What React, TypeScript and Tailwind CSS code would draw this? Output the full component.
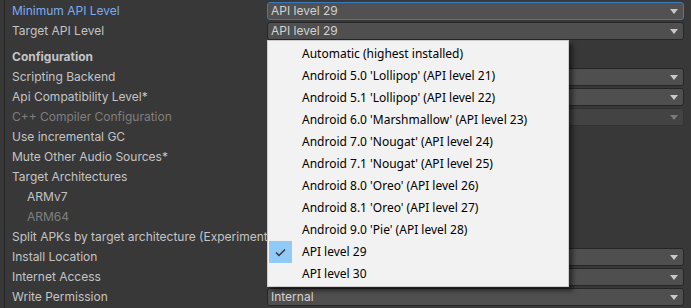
import React from "react";

const labelFont = { fontFamily: "Inter, 'Noto Sans', sans-serif" };
const menuFont = { fontFamily: "'Noto Sans', 'Open Sans', sans-serif" };

function Arrow({ dim }: { dim?: boolean }) {
  return (
    <svg width="8" height="5" viewBox="0 0 8 5" className="shrink-0">
      <polygon points="0,0 8,0 4,5" fill={dim ? "#7a7a7a" : "#c8c8c8"} />
    </svg>
  );
}

function Dropdown({ value, focused, disabled }: { value?: string; focused?: boolean; disabled?: boolean }) {
  const cls = focused
    ? "border-[#3a79bb] bg-[#515151]"
    : disabled
    ? "border-[#333333] bg-[#434343]"
    : "border-[#262626] bg-[#4f4f4f]";
  return (
    <div className={`flex h-[18px] flex-1 items-center justify-between rounded-[3px] border pl-[3px] pr-[5px] ${cls}`}>
      <span className={`text-[12px] leading-[16px] ${disabled ? "text-[#7f7f7f]" : "text-[#d2d2d2]"}`}>{value ?? ""}</span>
      <Arrow dim={disabled} />
    </div>
  );
}

type Row = {
  label: string;
  color?: string;
  indent?: boolean;
  dd?: { value?: string; focused?: boolean; disabled?: boolean };
  bold?: boolean;
};

function FieldRow({ row }: { row: Row }) {
  return (
    <div className="flex h-[20px] items-center">
      <div
        className={`w-[255px] shrink-0 overflow-hidden whitespace-nowrap text-[12px] leading-[20px] ${row.indent ? "pl-[15px]" : ""} ${row.bold ? "font-bold" : ""}`}
        style={{ color: row.color ?? "#c4c4c4" }}
      >
        {row.label}
      </div>
      {row.dd ? (
        <div className="flex flex-1 pr-[7px]">
          <Dropdown {...row.dd} />
        </div>
      ) : null}
    </div>
  );
}

const menuItems = [
  "Automatic (highest installed)",
  "Android 5.0 'Lollipop' (API level 21)",
  "Android 5.1 'Lollipop' (API level 22)",
  "Android 6.0 'Marshmallow' (API level 23)",
  "Android 7.0 'Nougat' (API level 24)",
  "Android 7.1 'Nougat' (API level 25)",
  "Android 8.0 'Oreo' (API level 26)",
  "Android 8.1 'Oreo' (API level 27)",
  "Android 9.0 'Pie' (API level 28)",
  "API level 29",
  "API level 30",
];

export default function App() {
  const top: Row[] = [
    { label: "Minimum API Level", color: "#7babf0", dd: { value: "API level 29", focused: true } },
    { label: "Target API Level", dd: { value: "API level 29" } },
  ];
  const rest: Row[] = [
    { label: "Scripting Backend", dd: {} },
    { label: "Api Compatibility Level*", dd: {} },
    { label: "C++ Compiler Configuration", color: "#7f7f7f", dd: { disabled: true } },
    { label: "Use incremental GC" },
    { label: "Mute Other Audio Sources*" },
    { label: "Target Architectures" },
    { label: "ARMv7", indent: true },
    { label: "ARM64", indent: true, color: "#7f7f7f" },
    { label: "Split APKs by target architecture (Experimental)" },
    { label: "Install Location", dd: {} },
    { label: "Internet Access", dd: {} },
    { label: "Write Permission", dd: { value: "Internal" } },
  ];
  return (
    <div className="relative h-[308px] w-[691px] overflow-hidden bg-[#383838]" style={labelFont}>
      <div className="flex h-full">
        <div className="ml-[4px] w-[1px] shrink-0 bg-[#262626]" />
        <div className="flex flex-1 flex-col pl-[7px] pt-[1px]">
          {top.map((r) => (
            <FieldRow key={r.label} row={r} />
          ))}
          <div className="mt-[6px]">
            <FieldRow row={{ label: "Configuration", bold: true }} />
          </div>
          {rest.map((r) => (
            <FieldRow key={r.label} row={r} />
          ))}
        </div>
      </div>

      <div
        className="absolute left-[267px] top-[40px] w-[302px] border border-[#cccccc] bg-[#f2f2f2] pb-[1px] pl-[1px] pt-[2px] shadow-[4px_4px_4px_rgba(0,0,0,0.45)]"
        style={menuFont}
      >
        {menuItems.map((t) => {
          const checked = t === "API level 29";
          return (
            <div key={t} className="flex h-[22px] items-center">
              <div className={`flex h-[22px] w-[23px] items-center justify-center ${checked ? "bg-[#91c9f7]" : ""}`}>
                {checked ? (
                  <svg width="11" height="9" viewBox="0 0 11 9">
                    <polyline points="1,4.5 4,7.5 10,1.5" fill="none" stroke="#333333" strokeWidth="1.4" />
                  </svg>
                ) : null}
              </div>
              <span className="ml-[10px] whitespace-nowrap text-[12px] leading-[16px] text-black">{t}</span>
            </div>
          );
        })}
      </div>
    </div>
  );
}
